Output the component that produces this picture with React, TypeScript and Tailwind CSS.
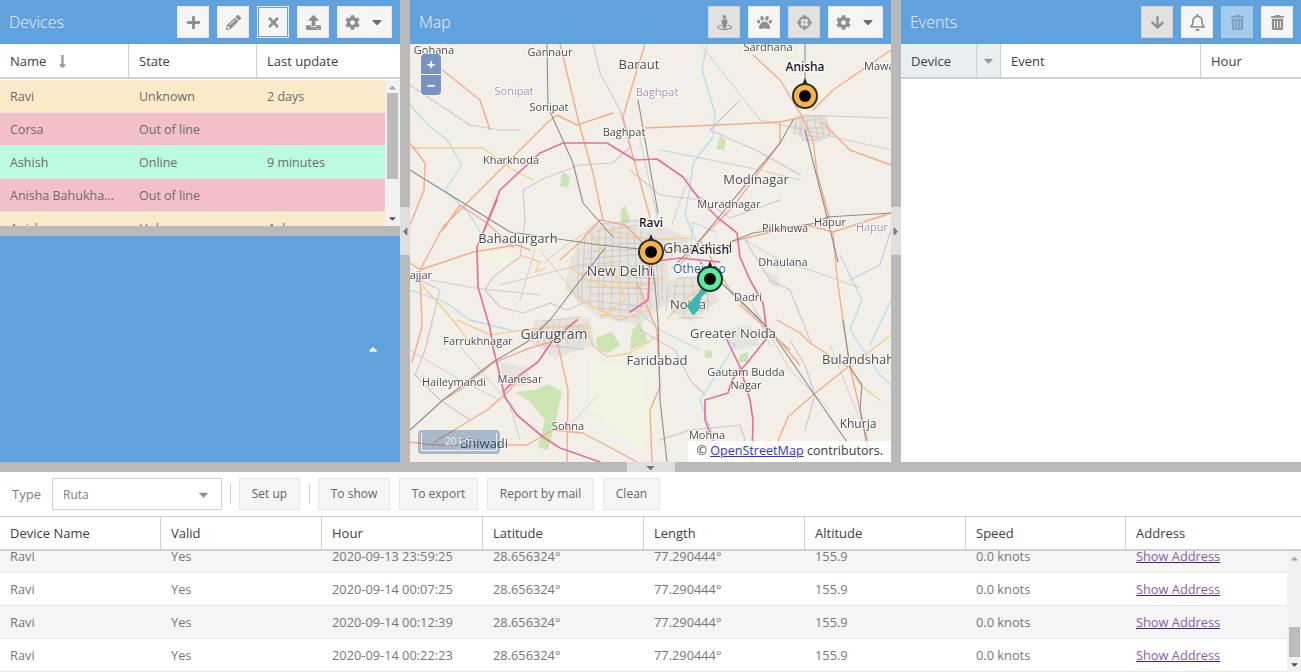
import type { ReactNode } from "react";
import {
  FaArrowDown,
  FaCaretDown,
  FaCaretLeft,
  FaCaretRight,
  FaCaretUp,
  FaCog,
  FaCrosshairs,
  FaLongArrowAltDown,
  FaPaw,
  FaPencilAlt,
  FaPlus,
  FaRegBell,
  FaStreetView,
  FaTimes,
  FaTrashAlt,
  FaUpload,
} from "react-icons/fa";

const devices = [
  { name: "Ravi", state: "Unknown", update: "2 days", tone: "bg-[#fbeaca]" },
  { name: "Corsa", state: "Out of line", update: "", tone: "bg-[#f3c0ca]" },
  { name: "Ashish", state: "Online", update: "9 minutes", tone: "bg-[#bbfce0]" },
  { name: "Anisha Bahukha...", state: "Out of line", update: "", tone: "bg-[#f3c0ca]" },
  { name: "Anish", state: "Unknown", update: "4 days", tone: "bg-[#fbeaca]" },
];

const positions = ["2020-09-13 23:59:25", "2020-09-14 00:07:25", "2020-09-14 00:12:39", "2020-09-14 00:22:23"];

const reportColumns = [
  { label: "Device Name", width: "w-[161px]" },
  { label: "Valid", width: "w-[161px]" },
  { label: "Hour", width: "w-[161px]" },
  { label: "Latitude", width: "w-[161px]" },
  { label: "Length", width: "w-[161px]" },
  { label: "Altitude", width: "w-[161px]" },
  { label: "Speed", width: "w-[160px]" },
  { label: "Address", width: "flex-1" },
];

// all map drawing uses page coordinates, the svg viewBox starts at the map corner
const orange = [
  "M560 44L580 127L593 173L603 220",
  "M645 44L633 83L623 117L632 153L650 217",
  "M410 143L425 163L424 190L410 225",
  "M440 68L480 100L490 130",
  "M645 128L717 125L780 122L803 117",
  "M613 113L577 125L557 115L547 123L500 170L443 227L420 270",
  "M753 55L780 80L800 113L813 140L817 173L830 220",
  "M823 123L850 150L891 165",
  "M891 50L833 90L813 110",
  "M780 122L780 143L733 207L700 240L680 265",
  "M410 263L420 270L473 252L517 245L530 250",
  "M443 230L460 205L487 223L513 247",
  "M420 270L422 327L412 362",
  "M730 242L767 233L807 225L833 232L891 213",
  "M833 232L837 277L843 320L850 367L860 410L870 450",
  "M777 320L800 333L810 343L848 367L813 395L788 417L775 448",
  "M443 400L460 390L493 363L530 348L557 340",
  "M433 443L487 410L510 390L520 375",
  "M410 442L433 445L527 445L553 430L583 433L637 462",
  "M557 340L568 390L567 462",
  "M637 283L657 330L660 387L650 410L652 462",
  "M740 305L790 350M700 240L730 290L770 330L800 365",
  "M560 260L580 242L600 220L625 225L650 250L690 250",
];

const yellow = [
  "M410 148L483 148L510 168L533 180",
  "M457 320L490 335L523 330L577 325L587 325L592 345L607 357L630 353L660 335",
  "M420 283L447 313L470 342",
  "M570 267L587 280L610 287L637 287L660 280",
  "M590 232L610 262L625 300L600 318",
  "M600 228L650 240L690 238",
  "M570 290L590 305L620 320L650 310",
  "M520 255L540 262L535 272L545 268",
  "M880 400L860 385L850 367L891 335",
  "M720 275L690 295L668 318",
];

const pink = [
  "M483 233L500 190L540 153L563 143L607 143L635 160L657 159L683 177L700 200L717 217L737 233L740 257L750 280L763 303L765 317L767 338L747 363L732 380L728 393L705 400L705 420L713 440",
  "M727 340L740 367L750 400L753 420L752 462",
  "M497 200L477 247L478 287L490 328L493 347L505 397L517 415L543 437L560 448L600 462",
  "M577 320L553 340L538 362L520 375L503 392",
  "M650 262L680 258L720 262",
  "M650 262L648 300L630 312",
];

const rails = [
  "M410 170L510 232L600 245L650 250",
  "M547 44L548 107L573 163L583 203L613 237",
  "M638 100L658 213",
  "M805 44L805 83",
  "M805 130L827 217L838 262",
  "M793 120L780 143L700 240L672 268",
  "M700 262L770 330L847 442L860 462",
  "M410 430L443 400L493 362L527 342L550 320L605 248",
  "M658 320L660 400L667 462",
  "M650 250L655 285L658 320",
  "M730 242L753 233L817 223L827 217L891 213",
  "M843 320L850 367L862 385L860 410L868 450",
];

const minorRoads = [
  "M420 278L475 288L540 295M500 285L580 265L620 262",
  "M860 288L810 270L783 262L745 240",
  "M598 395L565 430",
  "M455 340L510 405L520 440",
  "M410 350L460 380L500 400",
  "M688 178L672 225M638 130L660 230",
  "M750 300L790 370L830 410",
  "M830 345L860 420",
  "M540 250L560 275L580 300M535 250L520 300",
  "M700 44L760 120L891 150",
  "M800 115L891 118",
  "M660 150L760 170L800 180",
  "M596 226L566 245L545 262",
];

const rivers = [
  "M707 44L702 70L715 113L713 137L693 163L690 187L685 215L700 250",
  "M410 105L428 125L447 140L462 165L445 190L470 215L485 240",
  "M410 290L445 302L470 320L510 330",
  "M840 255L862 300L850 330L880 375L891 385",
  "M891 300L870 345",
  "M716 232L693 222L690 260",
  "M708 330L735 345L700 400L718 450",
  "M625 300L660 330L700 350",
  "M755 310L770 345",
];

const boundaries = [
  "M593 44L600 73L620 110L630 147L613 163L580 165L545 178L523 190L525 220L520 257L493 277L485 290L500 307L523 313L550 303L567 310L590 300",
  "M410 275L440 290L425 350L415 375L440 400L470 420",
  "M640 330L675 350L690 380L705 395",
  "M690 190L730 218L780 200M745 240L770 280L790 290L812 345",
  "M850 280L880 265L891 230",
  "M660 440L690 430L740 425L745 440L730 462",
  "M790 340L805 365L815 395L805 430",
  "M630 170L660 195L700 200",
  "M410 85L440 105L470 125L500 130L520 130",
  "M740 100L710 130L760 152L800 175",
];

const builtUp = [
  "M590 225L650 218L690 240L668 262L670 300L640 325L600 318L565 290L570 260Z",
  "M535 320L590 318L595 345L555 358L530 342Z",
  "M795 115L825 115L835 135L810 145L790 130Z",
  "M500 362L530 368L525 385L505 388Z",
  "M765 272L778 275L780 288L770 285Z",
  "M662 280L700 275L720 300L690 322L672 312Z",
  "M722 330L750 325L760 345L735 350Z",
];

const greenery = [
  "M720 136L726 140L724 150L716 149Z",
  "M562 172L570 176L568 188L560 186Z",
  "M625 205L630 220L622 228L620 212Z",
  "M515 392L535 390L548 384L562 392L556 420L548 450L538 447L545 420L530 402Z",
  "M596 338L612 332L620 345L608 353L598 350Z",
  "M632 330L640 322L648 342L630 350Z",
  "M740 355L748 352L748 362L738 362Z",
  "M705 350L712 352L712 358L705 358Z",
];

const paleFields = [
  "M590 360L640 370L650 410L620 425L590 410Z",
  "M600 420L650 400L660 420L640 450Z",
  "M480 250L520 255L500 270Z",
];

// fine street mesh for the Delhi, Gurugram and Noida built-up areas
function streetMesh(cx: number, cy: number, rx: number, ry: number, step: number) {
  const parts: string[] = [];
  for (let i = -rx; i <= rx; i += step) {
    const tilt = (i % 3) * 2;
    parts.push(`M${cx + i} ${cy - ry + Math.abs(i) / 3}L${cx + i + tilt} ${cy + ry - Math.abs(i) / 3}`);
  }
  for (let j = -ry; j <= ry; j += step) {
    const tilt = (j % 4) * 2;
    parts.push(`M${cx - rx + Math.abs(j) / 2} ${cy + j}L${cx + rx - Math.abs(j) / 2} ${cy + j + tilt}`);
  }
  return parts.join("");
}

const mesh = [
  streetMesh(620, 270, 42, 46, 7),
  streetMesh(562, 335, 26, 14, 6),
  streetMesh(812, 128, 16, 12, 6),
  streetMesh(690, 298, 22, 20, 8),
];

type MapLabel = { text: string; x: number; y: number; size: number; color?: string; anchor?: "start" | "middle" | "end" };

const labels: MapLabel[] = [
  { text: "Gohana", x: 434, y: 54, size: 11 },
  { text: "Gannaur", x: 550, y: 56, size: 11 },
  { text: "Sardhana", x: 768, y: 51, size: 11 },
  { text: "Baraut", x: 639, y: 69, size: 13 },
  { text: "Mawana", x: 864, y: 70, size: 11, anchor: "start" },
  { text: "Sonipat", x: 514, y: 95, size: 11, color: "#a98cb8" },
  { text: "Baghpat", x: 657, y: 96, size: 11, color: "#a98cb8" },
  { text: "Sonipat", x: 549, y: 111, size: 11 },
  { text: "Baghpat", x: 624, y: 136, size: 11 },
  { text: "Kharkhoda", x: 511, y: 164, size: 11 },
  { text: "Modinagar", x: 756, y: 184, size: 13 },
  { text: "Muradnagar", x: 729, y: 208, size: 11 },
  { text: "Hapur", x: 830, y: 226, size: 11 },
  { text: "Hapur", x: 872, y: 231, size: 11, color: "#a98cb8" },
  { text: "Pilkhuwa", x: 785, y: 232, size: 11 },
  { text: "Bahadurgarh", x: 518, y: 243, size: 13 },
  { text: "Ghaziabad", x: 663, y: 253, size: 14, anchor: "start" },
  { text: "Dhaulana", x: 783, y: 266, size: 11 },
  { text: "Jhajjar", x: 432, y: 279, size: 11, anchor: "end" },
  { text: "New Delhi", x: 620, y: 276, size: 14 },
  { text: "Dadri", x: 748, y: 301, size: 11 },
  { text: "Noida", x: 688, y: 309, size: 13 },
  { text: "Greater Noida", x: 733, y: 338, size: 13 },
  { text: "Gurugram", x: 554, y: 339, size: 14 },
  { text: "Farrukhnagar", x: 478, y: 345, size: 11 },
  { text: "Bulandshahr", x: 822, y: 364, size: 13, anchor: "start" },
  { text: "Faridabad", x: 657, y: 365, size: 13 },
  { text: "Gautam Budda", x: 746, y: 376, size: 11 },
  { text: "Manesar", x: 520, y: 383, size: 11 },
  { text: "Haileymandi", x: 454, y: 386, size: 11 },
  { text: "Nagar", x: 746, y: 389, size: 11 },
  { text: "Khurja", x: 858, y: 428, size: 12 },
  { text: "Sohna", x: 568, y: 430, size: 11 },
  { text: "Mohna", x: 707, y: 439, size: 11 },
  { text: "Bhiwadi", x: 484, y: 448, size: 13 },
];

const markers = [
  { name: "Anisha", x: 805, y: 96, fill: "#f7b548" },
  { name: "Ravi", x: 651, y: 252, fill: "#f7b548" },
  { name: "Ashish", x: 710, y: 279, fill: "#56f09a" },
];

function Lines({ paths, color, width }: { paths: string[]; color: string; width: number }) {
  return (
    <g fill="none" stroke={color} strokeWidth={width} strokeLinejoin="round" strokeLinecap="round">
      {paths.map((d) => (
        <path key={d} d={d} />
      ))}
    </g>
  );
}

function MapDrawing() {
  return (
    <svg viewBox="410 44 481 418" className="block h-full w-full bg-[#f2efe9]">
      <g className="blur-[0.4px]">
        {builtUp.map((d) => (
          <path key={d} d={d} fill="#e6e3df" />
        ))}
        {paleFields.map((d) => (
          <path key={d} d={d} fill="#f1f4e0" />
        ))}
        {greenery.map((d) => (
          <path key={d} d={d} fill="#cbe4b4" />
        ))}
        <Lines paths={mesh} color="#c3c0bc" width={0.7} />
        <Lines paths={rivers} color="#b6deea" width={1.3} />
        <Lines paths={boundaries} color="#d3c5d7" width={1.2} />
        <Lines paths={minorRoads} color="#cdcac5" width={0.9} />
        <Lines paths={yellow} color="#f8cd90" width={1.4} />
        <Lines paths={orange} color="#f7ab88" width={1.4} />
        <Lines paths={pink} color="#e9709a" width={1.7} />
        <Lines paths={rails} color="#8c8c8c" width={1.1} />
        {labels.map((l) => (
          <text
            key={l.text + l.x}
            x={l.x}
            y={l.y}
            fontSize={l.size}
            textAnchor={l.anchor ?? "middle"}
            fill={l.color ?? "#4a4a4a"}
            stroke="#ffffff"
            strokeOpacity={0.75}
            strokeWidth={2}
            className="[paint-order:stroke]"
          >
            {l.text}
          </text>
        ))}
      </g>
      <path
        d="M706 284L697 296L688 306L693 314L698 309L700 297L710 288Z"
        fill="#3fb7ad"
        stroke="#3fb7ad"
        strokeWidth={2}
        strokeLinejoin="round"
      />
      <text x={673} y={273} fontSize={12} fill="#1f5f9e" stroke="#ffffff" strokeWidth={2.5} className="[paint-order:stroke]">
        Otherzoo
      </text>
      {markers.map((m) => (
        <g key={m.name}>
          <path d={`M${m.x - 2.5} ${m.y - 12}L${m.x} ${m.y - 18}L${m.x + 2.5} ${m.y - 12}Z`} fill="#222222" />
          <circle cx={m.x} cy={m.y} r={12} fill={m.fill} stroke="#2d2d2d" strokeWidth={2} />
          <circle cx={m.x} cy={m.y} r={6} fill="#050505" />
          <text
            x={m.x}
            y={m.y - 25}
            fontSize={12}
            fontWeight={500}
            textAnchor="middle"
            fill="#111111"
            stroke="#ffffff"
            strokeWidth={2.5}
            className="font-['Noto_Sans',sans-serif] [paint-order:stroke]"
          >
            {m.name}
          </text>
        </g>
      ))}
    </svg>
  );
}

function ToolButton({ children, wide, pressed, focused, faded }: { children: ReactNode; wide?: boolean; pressed?: boolean; focused?: boolean; faded?: boolean }) {
  const tone = faded
    ? "border-[#a6cbec] bg-[#a6cbec] text-[#7ba2c4]"
    : pressed
      ? "border-[#d2d2d2] bg-[#e1e1e1] text-[#8f8f8f]"
      : "border-[#e8e8e8] bg-[#f5f5f5] text-[#8f8f8f]";
  return (
    <button
      className={`flex h-8 items-center justify-center border text-[15px] ${wide ? "w-[55px] gap-[9px]" : "w-8"} ${tone} ${
        focused ? "outline outline-1 -outline-offset-2 outline-[#5fa2dd]" : ""
      }`}
    >
      {children}
    </button>
  );
}

function PanelHeader({ title, children }: { title: string; children: ReactNode }) {
  return (
    <div className="flex h-11 shrink-0 items-center justify-between bg-[#5fa2dd] pl-[9px] pr-2">
      <span className="text-[16px] font-light text-[#f0f0f0]">{title}</span>
      <div className="flex gap-2">{children}</div>
    </div>
  );
}

function SettingsButton() {
  return (
    <ToolButton wide>
      <FaCog />
      <FaCaretDown className="text-[16px] text-[#6f6f6f]" />
    </ToolButton>
  );
}

function HeaderCell({ children, className }: { children: ReactNode; className: string }) {
  return <div className={`flex items-center border-r border-[#d0d0d0] px-[10px] pt-[2px] text-[13px] text-[#404040] ${className}`}>{children}</div>;
}

function ScrollBar({ width, thumbTop, thumbHeight, thumbWidth }: { width: string; thumbTop: string; thumbHeight: string; thumbWidth: string }) {
  return (
    <div className={`relative flex shrink-0 flex-col items-center bg-[#f1f1f1] ${width}`}>
      <div className={`bg-[#bcbcbc] ${thumbTop} ${thumbHeight} ${thumbWidth}`} />
      <FaCaretUp className="absolute top-[2px] text-[11px] text-[#a3a3a3]" />
      <FaCaretDown className="absolute bottom-[2px] text-[11px] text-[#505050]" />
    </div>
  );
}

function DevicesPanel() {
  return (
    <div className="flex w-[400px] shrink-0 flex-col">
      <PanelHeader title="Devices">
        <ToolButton>
          <FaPlus />
        </ToolButton>
        <ToolButton>
          <FaPencilAlt />
        </ToolButton>
        <ToolButton focused>
          <FaTimes />
        </ToolButton>
        <ToolButton>
          <FaUpload />
        </ToolButton>
        <SettingsButton />
      </PanelHeader>
      <div className="flex h-[35px] shrink-0 border-b-2 border-[#d0d0d0] bg-white">
        <HeaderCell className="w-[129px] gap-[9px]">
          Name <FaLongArrowAltDown className="text-[15px] text-[#9a9a9a]" />
        </HeaderCell>
        <HeaderCell className="w-[128px]">State</HeaderCell>
        <HeaderCell className="flex-1 border-r-0">Last update</HeaderCell>
      </div>
      <div className="flex h-[147px] shrink-0 overflow-hidden bg-white pt-px">
        <div className="flex-1 overflow-hidden">
          {devices.map((d) => (
            <div key={d.name} className={`flex h-[33px] items-center border-b border-[#e4e0e0] pt-[2px] text-[12.5px] text-[#6e6b68] ${d.tone}`}>
              <div className="w-[129px] px-[10px]">{d.name}</div>
              <div className="w-[128px] px-[10px]">{d.state}</div>
              <div className="flex-1 px-[10px]">{d.update}</div>
            </div>
          ))}
        </div>
        <ScrollBar width="w-[15px]" thumbTop="mt-[13px]" thumbHeight="h-[86px]" thumbWidth="w-[11px]" />
      </div>
      <div className="h-[10px] shrink-0 bg-[#b9b9b9]" />
      <div className="flex flex-1 items-center justify-end bg-[#5fa2dd] pr-5">
        <FaCaretUp className="text-[14px] text-[#eef5fb]" />
      </div>
    </div>
  );
}

function Splitter({ side }: { side: "left" | "right" }) {
  return (
    <div className="flex w-[10px] shrink-0 flex-col justify-center bg-[#b9b9b9]">
      <div className="flex h-12 items-center justify-center bg-[#dfdfdf]">
        {side === "left" ? <FaCaretLeft className="text-[13px] text-[#767676]" /> : <FaCaretRight className="text-[13px] text-[#767676]" />}
      </div>
    </div>
  );
}

function MapPanel() {
  return (
    <div className="flex w-[481px] shrink-0 flex-col">
      <PanelHeader title="Map">
        <ToolButton pressed>
          <FaStreetView />
        </ToolButton>
        <ToolButton>
          <FaPaw />
        </ToolButton>
        <ToolButton pressed>
          <FaCrosshairs />
        </ToolButton>
        <SettingsButton />
      </PanelHeader>
      <div className="relative flex-1 overflow-hidden">
        <MapDrawing />
        <div className="absolute left-[10px] top-[9px] flex flex-col gap-px rounded bg-white/40 p-px">
          <div className="flex h-5 w-5 items-center justify-center rounded-t-sm bg-[#7a92c0] text-[15px] font-bold leading-none text-white">+</div>
          <div className="flex h-5 w-5 items-center justify-center rounded-b-sm bg-[#7a92c0] text-[15px] font-bold leading-none text-white">−</div>
        </div>
        <div className="absolute bottom-2 left-[8px] h-6 w-[82px] rounded bg-[#003c88]/30 p-[3px]">
          <div className="flex h-[18px] items-center justify-center border border-t-0 border-white/80 text-[10px] text-[#eeeeee]">20 km</div>
        </div>
        <div className="absolute bottom-0 right-0 flex h-[21px] w-[203px] items-center justify-end bg-white/85 pr-2 text-[12.6px] text-[#404040]">
          ©&nbsp;<span className="text-[#3333dd] underline">OpenStreetMap</span>&nbsp;contributors.
        </div>
      </div>
    </div>
  );
}

function EventsPanel() {
  return (
    <div className="flex min-w-0 flex-1 flex-col bg-white">
      <PanelHeader title="Events">
        <ToolButton pressed>
          <FaArrowDown />
        </ToolButton>
        <ToolButton>
          <FaRegBell className="text-[17px] text-[#8a8a8a]" />
        </ToolButton>
        <ToolButton faded>
          <FaTrashAlt />
        </ToolButton>
        <ToolButton>
          <FaTrashAlt />
        </ToolButton>
      </PanelHeader>
      <div className="flex h-[35px] shrink-0 border-b-2 border-[#d0d0d0] bg-white">
        <HeaderCell className="w-[76px] bg-[#e9eef3]">Device</HeaderCell>
        <div className="flex w-6 items-center justify-center border-r border-[#d0d0d0] bg-[#e9eef3]">
          <FaCaretDown className="text-[15px] text-[#9a9a9a]" />
        </div>
        <HeaderCell className="w-[200px]">Event</HeaderCell>
        <HeaderCell className="flex-1 border-r-0">Hour</HeaderCell>
      </div>
    </div>
  );
}

function ReportButton({ label, width }: { label: string; width: string }) {
  return <button className={`h-8 border border-[#e6e6e6] bg-[#f5f5f5] text-[12px] text-[#666666] ${width}`}>{label}</button>;
}

function ReportPanel() {
  return (
    <div className="flex min-h-0 flex-1 flex-col bg-white">
      <div className="flex h-[44px] shrink-0 items-start pl-3 pt-[6px]">
        <span className="mt-[7px] w-10 text-[13px] text-[#808080]">Type</span>
        <div className="flex h-8 w-[170px] items-center justify-between border border-[#d0d0d0] pl-[10px] pr-[10px] pt-px text-[12px] text-[#808080]">
          Ruta
          <FaCaretDown className="text-[15px] text-[#8f8f8f]" />
        </div>
        <div className="ml-[8px] mr-[8px] mt-[5px] h-[21px] w-px bg-[#d0d0d0]" />
        <ReportButton label="Set up" width="w-[61px]" />
        <div className="ml-[9px] mr-[8px] mt-[5px] h-[21px] w-px bg-[#d0d0d0]" />
        <div className="flex gap-[9px]">
          <ReportButton label="To show" width="w-[72px]" />
          <ReportButton label="To export" width="w-[79px]" />
          <ReportButton label="Report by mail" width="w-[107px]" />
          <ReportButton label="Clean" width="w-[57px]" />
        </div>
      </div>
      <div className="flex h-[35px] shrink-0 border-y border-b-2 border-[#d0d0d0]">
        {reportColumns.map((c, i) => (
          <HeaderCell key={c.label} className={`${c.width} ${i === reportColumns.length - 1 ? "border-r-0" : ""}`}>
            {c.label}
          </HeaderCell>
        ))}
      </div>
      <div className="flex min-h-0 flex-1 overflow-hidden">
        <div className="flex-1 overflow-hidden">
          <div className="-mt-[11px]">
            {positions.map((hour, i) => (
              <div key={hour} className={`flex h-[33px] items-center border-b border-[#e8e8e8] pt-[2px] text-[12.8px] text-[#777777] ${i % 2 === 0 ? "bg-[#f5f5f5]" : "bg-white"}`}>
                <div className="w-[161px] px-[10px]">Ravi</div>
                <div className="w-[161px] px-[10px]">Yes</div>
                <div className="w-[161px] px-[10px]">{hour}</div>
                <div className="w-[161px] px-[10px]">28.656324°</div>
                <div className="w-[161px] px-[10px]">77.290444°</div>
                <div className="w-[161px] px-[10px]">155.9</div>
                <div className="w-[160px] px-[10px]">0.0 knots</div>
                <div className="flex-1 px-[10px] text-[#8460ad] underline decoration-[#551a8b]">Show Address</div>
              </div>
            ))}
          </div>
        </div>
        <ScrollBar width="w-[14px]" thumbTop="mt-[76px]" thumbHeight="h-[30px]" thumbWidth="w-[11px]" />
      </div>
    </div>
  );
}

export default function App() {
  return (
    <div className="flex h-[672px] w-[1301px] flex-col overflow-hidden bg-[#b9b9b9] font-['Open_Sans',sans-serif]">
      <div className="flex h-[462px] shrink-0">
        <DevicesPanel />
        <Splitter side="left" />
        <MapPanel />
        <Splitter side="right" />
        <EventsPanel />
      </div>
      <div className="flex h-[10px] shrink-0 justify-center bg-[#b9b9b9]">
        <div className="flex w-12 items-center justify-center bg-[#dfdfdf]">
          <FaCaretDown className="text-[13px] text-[#767676]" />
        </div>
      </div>
      <ReportPanel />
    </div>
  );
}
